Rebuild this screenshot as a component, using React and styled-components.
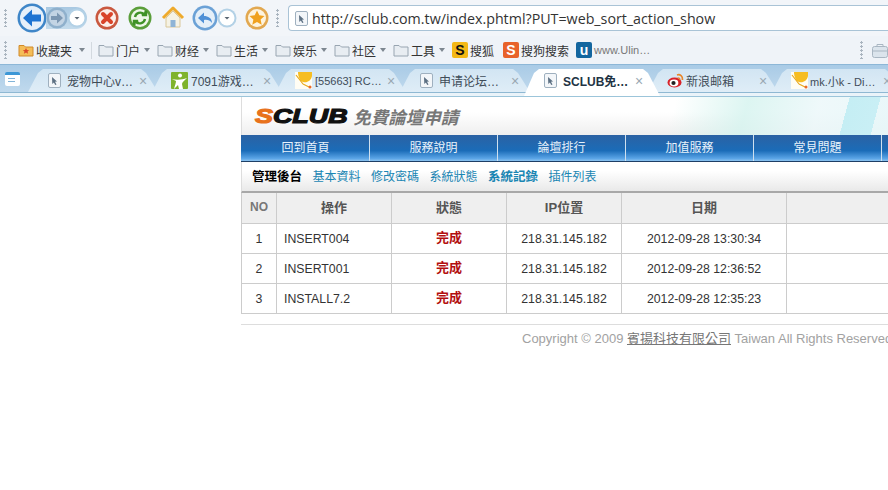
import styled, { createGlobalStyle } from "styled-components";

const Global = createGlobalStyle`
  html, body {
    margin: 0;
    padding: 0;
    background: #fff;
    overflow: hidden;
  }
  * { box-sizing: border-box; }
`;

const CJK = `"Liberation Sans", "Noto Sans CJK TC", sans-serif`;

const Page = styled.div`
  width: 888px;
  height: 490px;
  overflow: hidden;
  display: flex;
  flex-direction: column;
  font-family: ${CJK};
  background: #fff;
`;

const Toolbar = styled.div`
  height: 36px;
  display: flex;
  align-items: center;
  padding-left: 4px;
  background: #f2f5f9;
  flex: none;
`;

const Grip = styled.div`
  width: 3px;
  height: ${(p) => p.$h || 18}px;
  flex: none;
  margin: ${(p) => p.$m || "0"};
  background: radial-gradient(circle at 1.5px 1.5px, #a9b4bf 1px, transparent 1.3px) 0 0 / 3px 4px repeat-y;
`;

const RoundIcon = styled.svg`
  flex: none;
  display: block;
  margin: ${(p) => p.$m || "0"};
`;

const NavPill = styled.div`
  display: flex;
  align-items: center;
  flex: none;
  height: 22px;
  margin: ${(p) => p.$m};
  border-radius: 0 11px 11px 0;
  background: linear-gradient(#a8c8e2, #c4dbec);
`;

const AddressBar = styled.div`
  width: 620px;
  height: 26px;
  margin-left: 9px;
  flex: none;
  display: flex;
  align-items: center;
  padding-left: 6px;
  gap: 4px;
  background: #fff;
  border: 1px solid #a9c3d6;
  border-right: 0;
  border-radius: 4px 0 0 4px;
  color: #333;
  font: 14.25px "Open Sans", sans-serif;
  white-space: nowrap;
`;

const Bookmarks = styled.div`
  height: 28px;
  display: flex;
  align-items: center;
  padding-left: 4px;
  background: #eff3f8;
  position: relative;
  flex: none;
  font-size: 12px;
  color: #333;
`;

const Mark = styled.div`
  display: flex;
  align-items: center;
  flex: none;
  width: ${(p) => p.$w}px;
  gap: ${(p) => p.$gap ?? 2}px;
  white-space: nowrap;
  color: ${(p) => p.$muted ? "#777" : "#333"};
  font-size: ${(p) => p.$muted ? 11 : 12}px;
`;

const Caret = styled.span`
  width: 0;
  height: 0;
  flex: none;
  margin-left: ${(p) => p.$m ?? 2}px;
  border: 3.5px solid transparent;
  border-top: 4px solid #7d8790;
  border-bottom: 0;
`;

const Sep = styled.div`
  width: 1px;
  height: 17px;
  background: #d3d9df;
  margin: 0 6px;
  flex: none;
`;

const Badge = styled.span`
  width: 16px;
  height: 16px;
  flex: none;
  display: flex;
  align-items: center;
  justify-content: center;
  border-radius: 2px;
  background: ${(p) => p.$bg};
  color: ${(p) => p.$fg};
  font: bold 14px "Liberation Sans", sans-serif;
`;

const ToolBox = styled.div`
  position: absolute;
  right: 0;
  top: 5px;
  display: flex;
  align-items: center;
  gap: 9px;
`;

const TabStrip = styled.div`
  height: 33px;
  flex: none;
  position: relative;
  border-top: 1px solid #8db7d7;
  border-bottom: 1px solid #9cc5da;
  background: linear-gradient(#a9cbe6 0, #c0d9ed 27px, #8fb8d2 27px, #8fb8d2 28px, #eaf3f9 28px, #eaf3f9 100%);
  display: flex;
  align-items: flex-start;
  padding: 4px 0 0 28px;
`;

const TabMenu = styled.div`
  position: absolute;
  left: 5px;
  top: 7px;
  width: 15px;
  height: 14px;
  border-radius: 2px;
  border-top: 3px solid #3c97d6;
  background: repeating-linear-gradient(#fff 0 1px, #82b4d8 1px 2px, #fff 2px 3px) 3px 2px / 7px 7px no-repeat #fff;
`;

const Tab = styled.div`
  width: ${(p) => p.$active ? 136 : 130}px;
  height: ${(p) => p.$active ? 27 : 23}px;
  margin-right: ${(p) => p.$active ? -12 : -6}px;
  flex: none;
  position: relative;
  z-index: ${(p) => p.$active ? 2 : 1};
  display: flex;
  align-items: center;
  padding-left: ${(p) => p.$pad}px;
  padding-bottom: ${(p) => p.$active ? 4 : 0}px;
  gap: ${(p) => p.$gap}px;
  clip-path: polygon(0 100%, 10px 4px, 15px 0, calc(100% - 17px) 0, calc(100% - 12px) 4px, 100% 100%);
  background: ${(p) => p.$active ? "#fff" : "linear-gradient(#d2e5f3, #dfedf7)"};
  color: ${(p) => p.$active ? "#234" : "#3f4c58"};
  font-weight: ${(p) => p.$active ? 700 : 400};
  font-size: ${(p) => p.$latin ? 11 : 12}px;
  white-space: nowrap;
`;

const TabTitle = styled.span`
  width: 72px;
  flex: none;
  overflow: hidden;
`;

const Close = styled.span`
  position: absolute;
  left: 111px;
  top: 4px;
  color: #9aa7b2;
  font: 400 14px "Liberation Sans", sans-serif;
`;

const Body = styled.div`
  flex: 1;
  display: flex;
  min-height: 0;
`;

const Side = styled.div`
  width: 241px;
  flex: none;
`;

const Main = styled.div`
  width: 660px;
  flex: none;
`;

const Banner = styled.div`
  height: 38px;
  display: flex;
  align-items: center;
  padding-left: 13px;
  border-left: 1px solid #ddd;
  background:
    linear-gradient(105deg, transparent 587px, #c5eef4 587px, #c9eff5 617px, transparent 617px),
    linear-gradient(105deg, transparent 420px, rgba(212, 243, 238, 0.8) 490px, rgba(235, 247, 249, 0.8) 560px, rgba(228, 246, 248, 0.9) 660px),
    linear-gradient(#fff 40%, #efefef);
`;

const Logo = styled.span`
  font: italic 900 21px "Liberation Sans", sans-serif;
  -webkit-text-stroke: 1.2px currentColor;
  color: #111;
  transform: scaleX(1.28);
  transform-origin: left center;
  margin-right: 26px;
  span { color: #e8721c; }
`;

const Slogan = styled.span`
  font-size: 17.5px;
  font-weight: 700;
  font-style: italic;
  color: #777;
`;

const Nav = styled.div`
  height: 27px;
  display: grid;
  grid-template-columns: repeat(6, 128px);
  padding-left: 1px;
  background: linear-gradient(#2b62a3 0, #1b6cb8 60%, #5aa4e6 90%, #8cc3ef);
  border-bottom: 1px solid #1e3f66;
`;

const NavItem = styled.div`
  display: flex;
  align-items: center;
  justify-content: center;
  padding-bottom: 3px;
  color: #e8f2fb;
  font-size: 12px;
  border-right: 1px solid #cfe0ef;
`;

const SubNav = styled.div`
  height: 31px;
  display: flex;
  align-items: center;
  gap: 10.5px;
  padding: 0 0 3px 10px;
  font-size: 12px;
  border-left: 1px solid #ddd;
  border-bottom: 2px solid #a8a8a8;
  background: linear-gradient(#fff 30%, #e9e9e9);
`;

const SubLink = styled.span`
  color: ${(p) => p.$current ? "#000" : "#1a86b3"};
  font-weight: ${(p) => p.$bold ? 700 : 400};
  font-size: ${(p) => p.$bold ? 12.5 : 12}px;
  white-space: nowrap;
`;

const Table = styled.div`
  display: grid;
  grid-template-columns: 35px 115px 115px 115px 165px 115px;
  border-left: 1px solid #ccc;
`;

const Cell = styled.div`
  height: ${(p) => p.$head ? 31 : 30}px;
  display: flex;
  align-items: center;
  justify-content: ${(p) => p.$left ? "flex-start" : "center"};
  padding-left: ${(p) => p.$left ? 7 : 0}px;
  padding-bottom: ${(p) => p.$head ? 3 : 0}px;
  border-right: 1px solid #ccc;
  border-bottom: 1px solid #ccc;
  background: ${(p) => p.$head ? "#efefef" : "#fff"};
  color: ${(p) => p.$muted ? "#777" : p.$head ? "#555" : "#333"};
  font-weight: ${(p) => p.$head ? 700 : 400};
  font-size: ${(p) => p.$muted ? 12 : p.$head ? 13 : 12.3}px;
  white-space: nowrap;
`;

const Done = styled.span`
  color: #b30f0f;
  font-weight: 700;
  font-size: 13px;
  margin-top: -5px;
`;

const Footer = styled.div`
  margin-top: 10px;
  border-top: 1px solid #ddd;
  padding: 6px 0 0 281px;
  color: #a2a2a2;
  font-size: 13px;
  line-height: 15px;
  white-space: nowrap;
  span {
    color: #777;
    text-decoration: underline;
  }
`;

function CircleButton({ size, ring, fill, children, m }) {
  const c = size / 2;
  return (
    <RoundIcon width={size} height={size} viewBox={`0 0 ${size} ${size}`} $m={m}>
      <circle cx={c} cy={c} r={c - 0.5} fill={ring} />
      <circle cx={c} cy={c} r={c - 3} fill={fill} />
      {children}
    </RoundIcon>
  );
}

function Drop({ m }) {
  return (
    <RoundIcon width="20" height="20" viewBox="0 0 20 20" $m={m}>
      <circle cx="10" cy="10" r="9.500" fill="#b3d1e6" />
      <circle cx="10" cy="10" r="7.500" fill="#fff" />
      <path d="M7.500 9h5L10 11.500z" fill="#5a6672" />
    </RoundIcon>
  );
}

function PageIcon() {
  return (
    <RoundIcon width="13" height="15" viewBox="0 0 13 15">
      <rect x="0.5" y="0.5" width="12" height="14" rx="1.5" fill="#f3f6f9" stroke="#9fb0bf" />
      <path d="M4 4l5 4.500-2 .3 1.500 2.700-1.300.6-1.300-2.700L4.300 11z" fill="#5d7083" />
    </RoundIcon>
  );
}

function Folder({ star }) {
  return (
    <RoundIcon width="16" height="14" viewBox="0 0 16 14">
      <path d="M1 2.500h5l1.500 1.500H15v9H1z" fill={star ? "#f4bd58" : "#e8edf2"} stroke={star ? "#d08a2a" : "#98a5b1"} />
      {star && <path d="M8 5l1 2 2.200.2-1.700 1.400.6 2.100L8 9.600l-2.100 1.100.6-2.100-1.700-1.400L7 7z" fill="#d9482b" />}
    </RoundIcon>
  );
}

function Cup() {
  return (
    <RoundIcon width="17" height="17" viewBox="0 0 17 17">
      <rect width="17" height="17" fill="#fffdf4" />
      <path d="M3 0h14v4c-1 5-5 7-9 6C5 9 3 5 3 0z" fill="#f6bd22" />
      <path d="M1 3l7 9M8 12l6 3" stroke="#e9a91c" strokeWidth="1.200" />
      <circle cx="15" cy="15" r="1.500" fill="#e96b2c" />
    </RoundIcon>
  );
}

function GameIcon() {
  return (
    <RoundIcon width="17" height="17" viewBox="0 0 17 17">
      <rect width="17" height="17" rx="1" fill="#7fb32d" />
      <circle cx="9" cy="3.500" r="2" fill="#fff" />
      <path d="M1 7c4 1 10 1 15-1-3 3-5 4-5 6l1 5H8l-1-4-4 4c1-4 2-6 2-8z" fill="#fff" />
    </RoundIcon>
  );
}

function WeiboIcon() {
  return (
    <RoundIcon width="17" height="15" viewBox="0 0 17 15">
      <ellipse cx="7.500" cy="9.500" rx="7" ry="5" fill="#d8232a" />
      <ellipse cx="7" cy="10" rx="4.400" ry="3.400" fill="#fff" />
      <circle cx="6.500" cy="10" r="2.100" fill="#222" />
      <path d="M10 2c3-1 6 1 5.500 5" stroke="#e8862a" strokeWidth="1.700" fill="none" />
      <path d="M10.500 5c1.500-.4 2.600.6 2.400 2" stroke="#e8862a" strokeWidth="1.200" fill="none" />
    </RoundIcon>
  );
}

const folders = ["门户", "财经", "生活", "娱乐", "社区", "工具"];

const tabs = [
  { icon: <PageIcon />, title: "宠物中心v…", pad: 20, gap: 6 },
  { icon: <GameIcon />, title: "7091游戏…", pad: 19, gap: 3 },
  { icon: <Cup />, title: "[55663] RC…", pad: 19, gap: 3, latin: true },
  { icon: <PageIcon />, title: "申请论坛…", pad: 20, gap: 6 },
  { icon: <PageIcon />, title: "SCLUB免…", pad: 20, gap: 6, active: true },
  { icon: <WeiboIcon />, title: "新浪邮箱", pad: 19, gap: 2 },
  { icon: <Cup />, title: "mk.小k - Di…", pad: 19, gap: 2, latin: true },
];

const rows = [
  ["1", "INSERT004", "2012-09-28 13:30:34"],
  ["2", "INSERT001", "2012-09-28 12:36:52"],
  ["3", "INSTALL7.2", "2012-09-28 12:35:23"],
];

function Row({ no, action, date }) {
  return (
    <>
      <Cell>{no}</Cell>
      <Cell $left>{action}</Cell>
      <Cell><Done>完成</Done></Cell>
      <Cell>218.31.145.182</Cell>
      <Cell>{date}</Cell>
      <Cell />
    </>
  );
}

function App() {
  return (
    <Page>
      <Global />
      <Toolbar>
        <Grip $m="0 10px 0 0" />
        <CircleButton size={30} ring="#3f86c8" fill="#e6f0fa">
          <path d="M6 15l9-8.500v5h9v7h-9v5z" fill="#1e74d2" />
        </CircleButton>
        <NavPill $m="0 8px 0 -1px">
          <CircleButton size={22} ring="#8fb0cc" fill="#c3d4e4" m="0 -1px 0 0">
            <path d="M17 11l-6-5.500v3.500H5v4h6v3.500z" fill="#7c97b2" />
          </CircleButton>
          <Drop />
        </NavPill>
        <CircleButton size={24} ring="#c9583f" fill="#fbeee9">
          <path d="M8 8l8 8M16 8l-8 8" stroke="#d9442a" strokeWidth="4" strokeLinecap="round" />
        </CircleButton>
        <CircleButton size={24} ring="#5a9e3a" fill="#eef6e8" m="0 0 0 9px">
          <path d="M7 11a5.500 5.500 0 0 1 9-3l-2 1h4V5l-1 2M17 13a5.500 5.500 0 0 1-9 3l2-1H6v4l1-2" fill="none" stroke="#3f9226" strokeWidth="2.400" />
        </CircleButton>
        <RoundIcon width="24" height="24" viewBox="0 0 24 24" $m="0 0 0 9px">
          <path d="M2 12L12 2l10 10" fill="none" stroke="#eeaa2c" strokeWidth="3" strokeLinejoin="round" />
          <path d="M5 12l7-7 7 7v9H5z" fill="#f5f2e4" stroke="#d9c79a" />
          <rect x="9.500" y="14" width="5" height="7" fill="#8fb4d6" />
        </RoundIcon>
        <CircleButton size={26} ring="#6ba1d6" fill="#e5eff8" m="0 -1px 0 7px">
          <path d="M6 13l6-5.500v3.500c4 0 8 2 8 7-2-3-5-3.500-8-3v3.500z" fill="#4f90d6" />
        </CircleButton>
        <Drop m="0 8px 0 0" />
        <CircleButton size={24} ring="#e2a850" fill="#fdf3de">
          <path d="M12 4.500l2.300 4.800 5.200.6-3.900 3.600 1.100 5.200-4.700-2.700-4.700 2.700 1.100-5.200-3.900-3.600 5.200-.6z" fill="#f0a11e" />
        </CircleButton>
        <Grip $m="0 0 0 7px" />
        <AddressBar>
          <PageIcon />
          http://sclub.com.tw/index.phtml?PUT=web_sort_action_show
        </AddressBar>
      </Toolbar>
      <Bookmarks>
        <Grip $m="0 11px 0 0" />
        <Mark $w={67} $gap={2}>
          <Folder star />
          收藏夹
          <Caret $m={5} />
        </Mark>
        <Sep />
        {folders.map((f) => (
          <Mark key={f} $w={59} $gap={2}>
            <Folder />
            {f}
            <Caret />
          </Mark>
        ))}
        <Mark $w={51} $gap={2}>
          <Badge $bg="#f3b816" $fg="#111">S</Badge>
          搜狐
        </Mark>
        <Mark $w={73} $gap={2}>
          <Badge $bg="#e8622a" $fg="#fff">S</Badge>
          搜狗搜索
        </Mark>
        <Mark $w={90} $gap={2} $muted>
          <Badge $bg="#13669f" $fg="#fff">u</Badge>
          www.Ulin…
        </Mark>
        <ToolBox>
          <Grip />
          <RoundIcon width="16" height="15" viewBox="0 0 16 15">
            <rect x="0.500" y="3.500" width="15" height="11" rx="2" fill="#dbe4ec" stroke="#a9b6c2" />
            <path d="M5 3.500V1.500h6v2M1 8h14" stroke="#a9b6c2" fill="none" />
          </RoundIcon>
        </ToolBox>
      </Bookmarks>
      <TabStrip>
        <TabMenu />
        {tabs.map((t) => (
          <Tab key={t.title} $active={t.active} $pad={t.pad} $gap={t.gap} $latin={t.latin}>
            {t.icon}
            <TabTitle>{t.title}</TabTitle>
            <Close>×</Close>
          </Tab>
        ))}
      </TabStrip>
      <Body>
        <Side />
        <Main>
          <Banner>
            <Logo><span>S</span>CLUB</Logo>
            <Slogan>免費論壇申請</Slogan>
          </Banner>
          <Nav>
            {["回到首頁", "服務說明", "論壇排行", "加值服務", "常見問題", ""].map((n) => (
              <NavItem key={n || "blank"}>{n}</NavItem>
            ))}
          </Nav>
          <SubNav>
            <SubLink $current $bold>管理後台</SubLink>
            <SubLink>基本資料</SubLink>
            <SubLink>修改密碼</SubLink>
            <SubLink>系統狀態</SubLink>
            <SubLink $bold>系統記錄</SubLink>
            <SubLink>插件列表</SubLink>
          </SubNav>
          <Table>
            <Cell $head $muted>NO</Cell>
            {["操作", "狀態", "IP位置", "日期", ""].map((h) => (
              <Cell key={h || "blank"} $head>{h}</Cell>
            ))}
            {rows.map(([no, action, date]) => (
              <Row key={no} no={no} action={action} date={date} />
            ))}
          </Table>
          <Footer>
            Copyright © 2009 <span>賓揚科技有限公司</span> Taiwan All Rights Reserved
          </Footer>
        </Main>
      </Body>
    </Page>
  );
}

export default App;
